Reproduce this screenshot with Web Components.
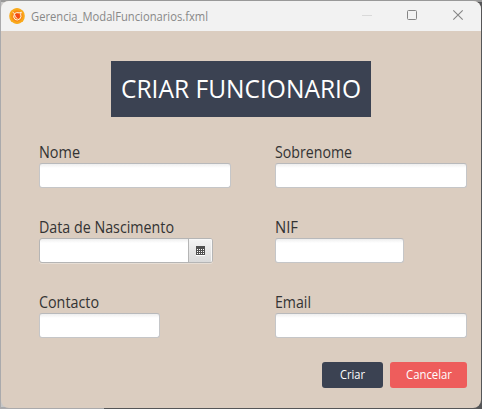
<!DOCTYPE html>
<html lang="pt"><head><meta charset="utf-8"><title>Gerencia_ModalFuncionarios.fxml</title>
<style>
html,body{margin:0;height:100%;overflow:hidden}
body{font-family:"Open Sans","Noto Sans",sans-serif;
background:linear-gradient(#aaaaac,#aaaaac) 0 0/1px 100% no-repeat,linear-gradient(#999,#999) 0 0/100% 2px no-repeat,linear-gradient(90deg,#aaaaac 104px,#555658 104px) 0 100%/100% 2px no-repeat,linear-gradient(90deg,#c8c8c8 50%,#555658 50%)}
</style></head><body>
<modal-window>
  <title-bar slot="bar"><fit-text w="177">Gerencia_ModalFuncionarios.fxml</fit-text></title-bar>
  <page-heading><fit-text w="240">CRIAR FUNCIONARIO</fit-text></page-heading>
  <form-grid>
    <form-field style="--w:192px"><fit-text slot="label" w="41">Nome</fit-text></form-field>
    <form-field style="--w:192px"><fit-text slot="label" w="77">Sobrenome</fit-text></form-field>
    <form-field style="--w:174px" date><fit-text slot="label" w="135">Data de Nascimento</fit-text></form-field>
    <form-field style="--w:129px"><fit-text slot="label" w="23">NIF</fit-text></form-field>
    <form-field style="--w:121px"><fit-text slot="label" w="60">Contacto</fit-text></form-field>
    <form-field style="--w:192px"><fit-text slot="label" w="36">Email</fit-text></form-field>
  </form-grid>
  <action-row>
    <action-button style="--w:61px;--c:#3b4252"><fit-text w="25">Criar</fit-text></action-button>
    <action-button style="--w:77px;--c:#ee5d5c"><fit-text w="46">Cancelar</fit-text></action-button>
  </action-row>
</modal-window>
<script>
const define=(name,html,init)=>customElements.define(name,class extends HTMLElement{
  constructor(){super();this.attachShadow({mode:'open'}).innerHTML=html}
  connectedCallback(){if(init)init(this)}
});
define('modal-window',`<style>:host{display:flex;flex-direction:column;box-sizing:border-box;width:480px;height:407px;margin:1px;background:#dbcdc0;border-radius:8px;overflow:hidden}</style><slot name="bar"></slot><slot></slot>`);
define('title-bar',`<style>:host{display:flex;align-items:center;height:30px;flex:none;background:#f2f2f2;color:#888;font-size:12.5px;padding-left:8px;box-sizing:border-box}
.logo{margin-right:6px;flex:none}.controls{display:flex;margin-left:auto}.controls svg{display:block}</style>
<svg class="logo" width="16" height="16" viewBox="0 0 16 16"><path d="M5 .7Q8-.6 11 .7L14 2.8Q15.8 5 15.8 8T14 13.2L11 15.3Q8 16.6 5 15.3L2 13.2Q.2 11 .2 8T2 2.8Z" fill="#f9a91a"/><circle cx="8" cy="8" r="5.8" fill="#f98b16"/><circle cx="8.3" cy="7.9" r="2.6" fill="#f44816"/><path d="M3.6 4.2L5.6 5.6Q3.4 9.5 6 11.4Q8.4 12.8 10.8 11Q12.8 8.8 11.6 6L12.4 4.2L10.2 4.8Q7.4 4 5.6 5.6M5.8 6.8Q5.6 9.6 8.4 10.4" fill="none" stroke="#ffeedd" stroke-width="1"/></svg>
<slot></slot>
<div class="controls"><svg width="136" height="30" viewBox="0 0 136 30" fill="none"><path d="M17 14.5H27" stroke="#d9d9d9"/><rect x="62.5" y="9.5" width="9" height="9" rx="1" stroke="#858585"/><path d="M108.3 9.3L117.7 18.7M117.7 9.3L108.3 18.7" stroke="#858585" stroke-width="1.1"/></svg></div>`);
define('page-heading',`<style>:host{display:flex;align-items:center;justify-content:center;align-self:center;box-sizing:border-box;width:260px;height:56px;flex:none;margin-top:30px;padding:0 1px 2px 0;background:#3b4252;color:#fff;font-size:25px;line-height:54px}</style><slot></slot>`);
define('form-grid',`<style>:host{display:grid;grid-template-columns:236px 192px;grid-auto-rows:75px;padding:26px 0 0 38px;height:219px;flex:none}</style><slot></slot>`);
define('form-field',`<style>:host{display:block;color:#333;font-size:15.5px;line-height:18px}
.label{height:20px}.box{display:flex;box-sizing:border-box;width:var(--w);height:25px;border:1px solid #c5c6c8;border-top-color:#b8b9bb;border-radius:3px;background:linear-gradient(#eee,#fff 4px);overflow:hidden}
.day{display:none}:host([date]) .box{border-color:#b5b5b5;box-shadow:0 1px #e7ded5}
:host([date]) .day{display:flex;align-items:center;justify-content:center;width:23px;margin-left:auto;border-left:1px solid #b5b5b5;background:linear-gradient(#f4f4f4,#dadada);box-shadow:inset -1px 1px #f8f8f8}</style>
<div class="label"><slot name="label"></slot></div><div class="box"><span class="day"><svg width="9" height="10" viewBox="0 0 9 10" shape-rendering="crispEdges"><path fill="#505050" d="M0 0H9V9H0Z"/><path stroke="#fff" stroke-dasharray="1 1" d="M1 3.5H8M1 5.5H8M1 7.5H8"/><path stroke="#fff" d="M0 9.5H9"/></svg></span></div>`);
define('action-row',`<style>:host{display:flex;justify-content:flex-end;gap:7px;padding:0 14px 0 0}</style><slot></slot>`);
define('action-button',`<style>:host{display:flex;align-items:center;justify-content:center;width:var(--w);height:26px;border-radius:3px;background:var(--c);color:#fff;font-size:12px;line-height:26px}</style><slot></slot>`);
// Condenses a line of text horizontally to the width given in its "w" attribute.
define('fit-text',`<style>:host{display:block;white-space:nowrap;flex:none}span{display:inline-block;transform-origin:0 50%}</style><span><slot></slot></span>`,el=>{
  const s=el.shadowRoot.querySelector('span'),w=+el.getAttribute('w');
  s.style.transform='scaleX('+w/s.getBoundingClientRect().width+')';
  el.style.width=w+'px';
});
</script></body></html>
